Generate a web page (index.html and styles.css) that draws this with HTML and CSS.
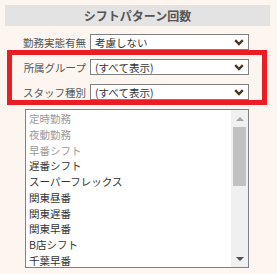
FILE: index.html
```html
<!DOCTYPE html>
<html lang="ja">
<head>
<meta charset="utf-8">
<link rel="stylesheet" href="styles.css">
</head>
<body>
<div class="panel">
  <div class="header">シフトパターン回数</div>
  <div class="rows">
    <div class="row">
      <span class="label">勤務実態有無</span>
      <div class="select"><span>考慮しない</span><svg class="chev" width="10" height="7" viewBox="0 0 10 7"><polyline points="1.2,1.2 5,5 8.8,1.2" fill="none" stroke="#4a3621" stroke-width="2.4"/></svg></div>
    </div>
    <div class="row">
      <span class="label">所属グループ</span>
      <div class="select"><span>(すべて表示)</span><svg class="chev" width="10" height="7" viewBox="0 0 10 7"><polyline points="1.2,1.2 5,5 8.8,1.2" fill="none" stroke="#4a3621" stroke-width="2.4"/></svg></div>
    </div>
    <div class="row">
      <span class="label">スタッフ種別</span>
      <div class="select"><span>(すべて表示)</span><svg class="chev" width="10" height="7" viewBox="0 0 10 7"><polyline points="1.2,1.2 5,5 8.8,1.2" fill="none" stroke="#4a3621" stroke-width="2.4"/></svg></div>
    </div>
  </div>
  <div class="listbox">
    <ul class="options">
      <li class="disabled">定時勤務</li>
      <li class="disabled">夜動勤務</li>
      <li class="disabled">早番シフト</li>
      <li>遅番シフト</li>
      <li>スーパーフレックス</li>
      <li>関東昼番</li>
      <li>関東遅番</li>
      <li>関東早番</li>
      <li>B店シフト</li>
      <li>千葉早番</li>
    </ul>
    <div class="scrollbar">
      <div class="arrow up"></div>
      <div class="track"><div class="thumb"></div></div>
      <div class="arrow down"></div>
    </div>
  </div>
  <div class="highlight"></div>
</div>
</body>
</html>
```
FILE: styles.css
```css
html, body {
  margin: 0;
  padding: 0;
}
body {
  background: #fdf5ef;
  font-family: "Noto Sans CJK JP", "Noto Sans", sans-serif;
  width: 277px;
  height: 274px;
  overflow: hidden;
}
.panel {
  position: relative;
  padding: 5px 0 0 5px;
}
.header {
  width: 265px;
  height: 21px;
  line-height: 21px;
  background: #e3e3e3;
  text-align: center;
  font-weight: bold;
  font-size: 12px;
  color: #555;
}
.rows {
  margin-top: 8px;
  display: flex;
  flex-direction: column;
  gap: 9px;
}
.row {
  display: flex;
  align-items: center;
  height: 16px;
}
.label {
  width: 81px;
  padding-right: 4px;
  text-align: right;
  font-size: 10.5px;
  color: #555;
  white-space: nowrap;
}
.select {
  box-sizing: border-box;
  width: 159px;
  height: 16px;
  border: 1px solid #808080;
  background: #fff;
  display: flex;
  align-items: center;
  justify-content: space-between;
  padding: 0 4px 0 4px;
  font-size: 10.5px;
  color: #333;
}
.chev {
  display: block;
  margin-right: 0;
}
.listbox {
  box-sizing: border-box;
  margin: 9px 0 0 20px;
  width: 224px;
  height: 159px;
  border: 1px solid #808080;
  background: #fff;
  display: flex;
  overflow: hidden;
}
.options {
  list-style: none;
  margin: 0;
  padding: 1px 0 0 3px;
  flex: 1;
  font-size: 10.5px;
  color: #333;
}
.options li {
  height: 15.75px;
  line-height: 15.75px;
  white-space: nowrap;
}
.options li.disabled {
  color: #9a9a9a;
}
.scrollbar {
  width: 17px;
  background: #f0f0f0;
  display: flex;
  flex-direction: column;
}
.arrow {
  height: 17px;
  display: flex;
  align-items: center;
  justify-content: center;
}
.arrow::after {
  content: "";
  width: 0;
  height: 0;
  border-left: 4px solid transparent;
  border-right: 4px solid transparent;
}
.arrow.up::after {
  border-bottom: 4px solid #a3a3a3;
}
.arrow.down::after {
  border-top: 4px solid #505050;
}
.track {
  flex: 1;
  padding: 0 2px;
}
.thumb {
  height: 59px;
  background: #c1c1c1;
}
.highlight {
  position: absolute;
  left: 7px;
  top: 50px;
  width: 260px;
  height: 55px;
  box-sizing: border-box;
  border: 5px solid #ec1c24;
}
```
